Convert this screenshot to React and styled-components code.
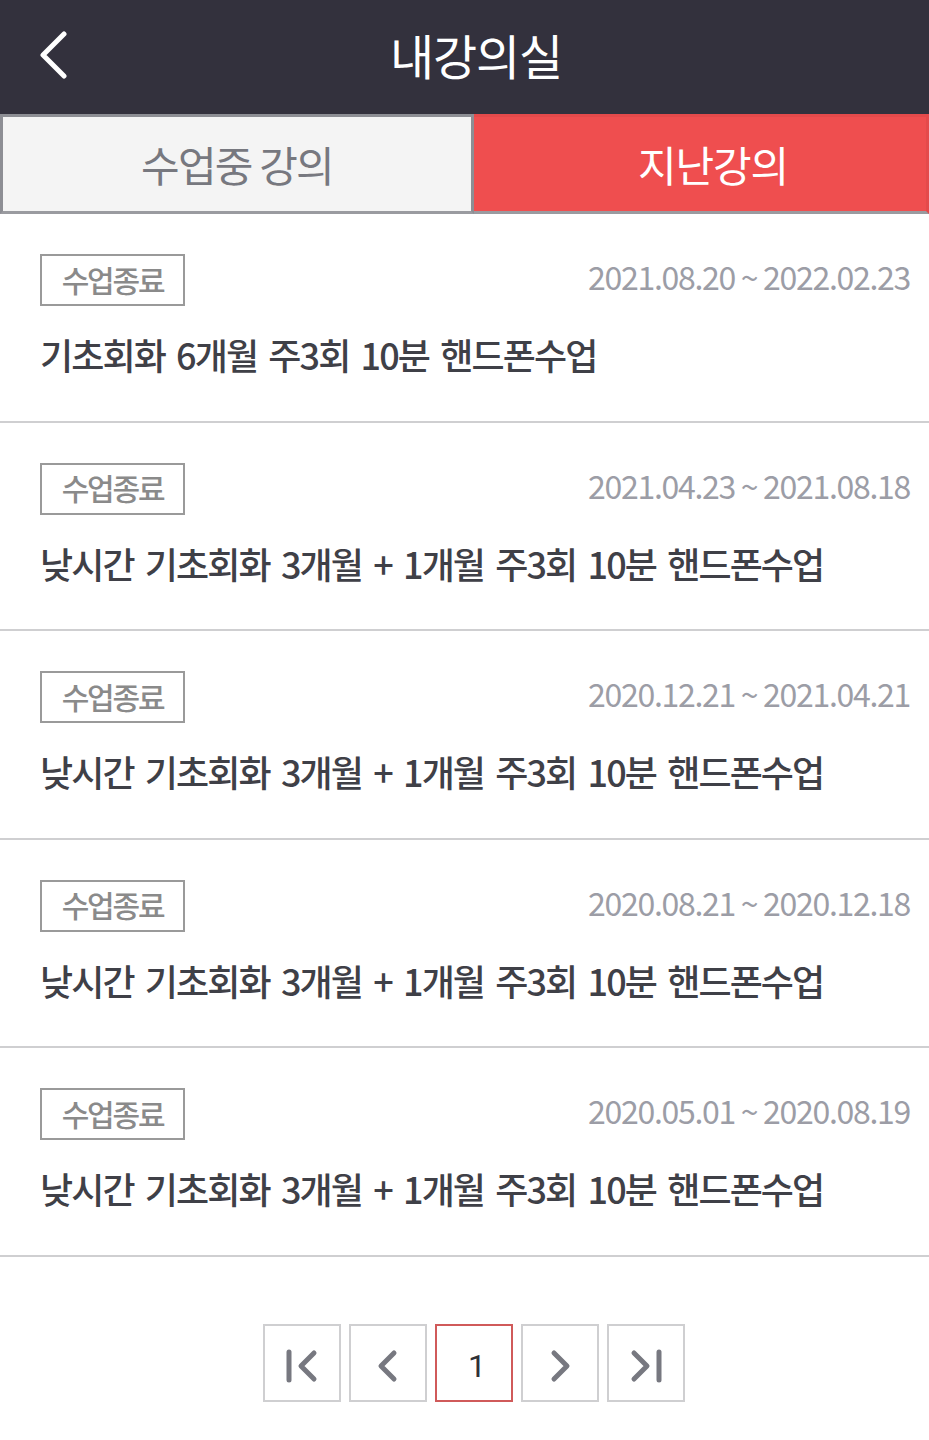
import React from 'react'
import styled, { createGlobalStyle } from 'styled-components'

const GlobalStyle = createGlobalStyle`
  html, body {
    margin: 0;
    padding: 0;
    background: #ffffff;
    font-family: "Noto Sans CJK KR", "Noto Sans", sans-serif;
  }
`

const lectures = [
  { period: '2021.08.20 ~ 2022.02.23', title: '기초회화 6개월 주3회 10분 핸드폰수업' },
  { period: '2021.04.23 ~ 2021.08.18', title: '낮시간 기초회화 3개월 + 1개월 주3회 10분 핸드폰수업' },
  { period: '2020.12.21 ~ 2021.04.21', title: '낮시간 기초회화 3개월 + 1개월 주3회 10분 핸드폰수업' },
  { period: '2020.08.21 ~ 2020.12.18', title: '낮시간 기초회화 3개월 + 1개월 주3회 10분 핸드폰수업' },
  { period: '2020.05.01 ~ 2020.08.19', title: '낮시간 기초회화 3개월 + 1개월 주3회 10분 핸드폰수업' },
]

export default function App() {
  return (
    <Page>
      <GlobalStyle />
      <Header>
        <BackButton>
          <svg width="30" height="48" viewBox="0 0 30 48" fill="none">
            <path d="M26 3 L5 24 L26 45" stroke="#fff" strokeWidth="5" strokeLinecap="round" strokeLinejoin="round" />
          </svg>
        </BackButton>
        <Title>내강의실</Title>
      </Header>

      <Tabs>
        <Tab>수업중 강의</Tab>
        <Tab active>지난강의</Tab>
      </Tabs>

      <List>
        {lectures.map((item, i) => (
          <Row key={i}>
            <RowTop>
              <Badge>수업종료</Badge>
              <Period>{item.period}</Period>
            </RowTop>
            <LectureTitle>{item.title}</LectureTitle>
          </Row>
        ))}
      </List>

      <Pager>
        <PageBox>
          <svg width="38" height="38" viewBox="0 0 38 38" fill="none">
            <path d="M6 5 V33" stroke="#777880" strokeWidth="5" strokeLinecap="round" />
            <path d="M31 6 L18 19 L31 32" stroke="#777880" strokeWidth="5" strokeLinecap="round" strokeLinejoin="round" />
          </svg>
        </PageBox>
        <PageBox>
          <svg width="38" height="38" viewBox="0 0 38 38" fill="none">
            <path d="M25 6 L12 19 L25 32" stroke="#777880" strokeWidth="5" strokeLinecap="round" strokeLinejoin="round" />
          </svg>
        </PageBox>
        <PageBox current>1</PageBox>
        <PageBox>
          <svg width="38" height="38" viewBox="0 0 38 38" fill="none">
            <path d="M13 6 L26 19 L13 32" stroke="#777880" strokeWidth="5" strokeLinecap="round" strokeLinejoin="round" />
          </svg>
        </PageBox>
        <PageBox>
          <svg width="38" height="38" viewBox="0 0 38 38" fill="none">
            <path d="M7 6 L20 19 L7 32" stroke="#777880" strokeWidth="5" strokeLinecap="round" strokeLinejoin="round" />
            <path d="M32 5 V33" stroke="#777880" strokeWidth="5" strokeLinecap="round" />
          </svg>
        </PageBox>
      </Pager>
    </Page>
  )
}

const Page = styled.div`
  width: 929px;
  min-height: 1440px;
  background: #fff;
`

const Header = styled.header`
  position: relative;
  height: 114px;
  background: #33313d;
  display: flex;
  align-items: center;
  justify-content: center;
`

const BackButton = styled.div`
  position: absolute;
  left: 38px;
  top: 31px;
  display: flex;
`

const Title = styled.h1`
  margin: 0 0 6px 23px;
  color: #fff;
  font-size: 48px;
  font-weight: 400;
  letter-spacing: -1.2px;
`

const Tabs = styled.div`
  display: grid;
  grid-template-columns: 474px 1fr;
  height: 100px;
`

const Tab = styled.div`
  display: flex;
  align-items: center;
  justify-content: center;
  box-sizing: border-box;
  font-size: 42px;
  letter-spacing: ${p => (p.active ? '-1.2px' : '-1.8px')};
  padding-bottom: 2px;
  padding-left: ${p => (p.active ? '26px' : '0')};
  background: ${p => (p.active ? '#ef4e4f' : '#f4f4f4')};
  color: ${p => (p.active ? '#fff' : '#77787f')};
  border: 3px solid ${p => (p.active ? '#e44a4b' : '#8d8e94')};
  border-left-width: ${p => (p.active ? '0' : '3px')};
  border-bottom-color: #9a9ba0;
`

const List = styled.div`
  display: flex;
  flex-direction: column;
`

const Row = styled.div`
  height: 208.5px;
  box-sizing: border-box;
  border-bottom: 2px solid #cfcfd1;
  padding: 40px 19px 0 40px;
`

const RowTop = styled.div`
  display: flex;
  justify-content: space-between;
  align-items: center;
`

const Badge = styled.span`
  box-sizing: border-box;
  width: 145px;
  height: 52px;
  border: 2px solid #9a9a9a;
  color: #8a8a8a;
  font-size: 30px;
  font-weight: 500;
  letter-spacing: -2.2px;
  display: flex;
  align-items: center;
  justify-content: center;
  padding-bottom: 3px;
`

const Period = styled.span`
  color: #9c9da6;
  font-size: 32px;
  letter-spacing: -1.3px;
  margin-top: -8px;
`

const LectureTitle = styled.div`
  margin-top: 22px;
  color: #3f4047;
  font-size: 36px;
  font-weight: 500;
  letter-spacing: -1.9px;
  word-spacing: 5px;
`

const Pager = styled.div`
  display: flex;
  justify-content: center;
  gap: 8px;
  padding-top: 67px;
  padding-left: 19px;
`

const PageBox = styled.div`
  box-sizing: border-box;
  width: 78px;
  height: 78px;
  border: 2px solid ${p => (p.current ? '#d05a5a' : '#cfcfd1')};
  display: flex;
  align-items: center;
  justify-content: center;
  color: #2f3036;
  font-family: "Roboto", sans-serif;
  font-size: 32px;
  padding-top: 6px;
  padding-left: ${p => (p.current ? '6px' : '0')};
`
